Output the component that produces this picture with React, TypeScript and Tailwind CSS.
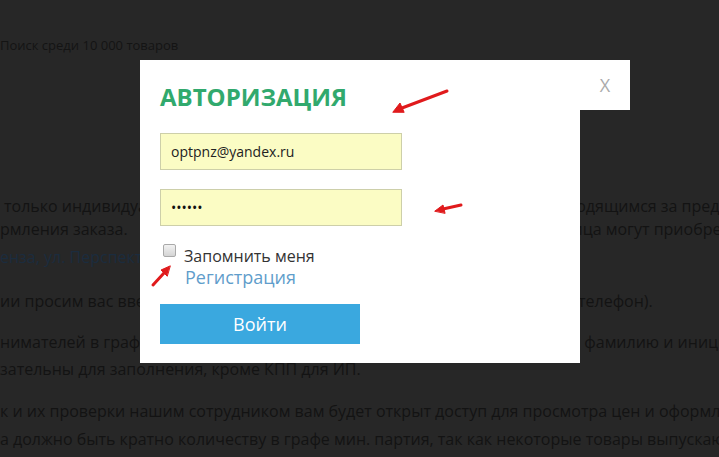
import React from "react";

const lines: { text: string; mt: string; link?: boolean; pl?: string }[] = [
  { text: "только индивидуальным предпринимателям и юридическим лицам, находящимся за пределами", mt: "mt-0", pl: "pl-[4px]" },
  { text: "рмления заказа.\u00a0\u00a0 Физические лица из других регионов и юридические лица могут приобрести", mt: "mt-[-1px]" },
  { text: "енза, ул. Перспективная, д. 1", mt: "mt-[4px]", link: true },
  { text: "ии просим вас ввести реквизиты организации (ИНН, КПП, адрес, личный телефон).", mt: "mt-[20px]" },
  { text: "нимателей в графе «Наименование организации» необходимо указывать фамилию и инициалы", mt: "mt-[17px]" },
  { text: "зательны для заполнения, кроме КПП для ИП.", mt: "mt-[3px]" },
  { text: "к и их проверки нашим сотрудником вам будет открыт доступ для просмотра цен и оформления", mt: "mt-[18px]" },
  { text: "а должно быть кратно количеству в графе мин. партия, так как некоторые товары выпускаются", mt: "mt-[4px]" },
];

export default function App() {
  return (
    <div
      className="relative w-[719px] h-[457px] overflow-hidden bg-[#272727]"
      style={{ fontFamily: "'Open Sans', 'Noto Sans', sans-serif" }}
    >
      {/* background page (under overlay) */}
      <div className="flex flex-col">
        <div className="pt-[36px] text-[13px] leading-[18px] text-[#141414] whitespace-nowrap">
          Поиск среди 10 000 товаров
        </div>
        <div className="mt-[140px] flex flex-col text-[16px] leading-[24px] whitespace-nowrap">
          {lines.map((l, i) => (
            <div
              key={i}
              className={`${l.mt} ${l.pl ?? ""} ${l.link ? "text-[#1b2c3e]" : "text-[#131313]"}`}
            >
              {l.text}
            </div>
          ))}
        </div>
      </div>

      {/* modal */}
      <div className="absolute left-[140px] top-[60px] w-[440px] h-[303px] bg-white">
        <div className="flex flex-col items-start pl-[20px] pt-[21px]">
          <h2 className="text-[24px] leading-[32px] font-bold text-[#31a96d]">АВТОРИЗАЦИЯ</h2>
          <input
            readOnly
            value="optpnz@yandex.ru"
            className="mt-[20px] h-[37px] w-[242px] border border-[#cdcfa9] bg-[#fbfcc4] px-[10px] text-[14px] text-[#222] outline-none"
          />
          <input
            readOnly
            type="password"
            value="123456"
            className="mt-[19px] h-[37px] w-[242px] border border-[#cdcfa9] bg-[#fbfcc4] px-[10px] text-[14px] text-[#111] outline-none"
          />
          <div className="mt-[18px] flex items-start">
            <span className="ml-[3px] h-[13px] w-[13px] rounded-[2px] border border-[#a9a9a9] bg-gradient-to-b from-[#f2f2f2] to-[#d4d4d4]" />
            <div className="ml-[8px] flex flex-col">
              <span className="mt-[2px] text-[16px] leading-[20px] text-[#333]">Запомнить меня</span>
              <span className="ml-[1px] text-[18px] leading-[22px] text-[#5f9dcb]">Регистрация</span>
            </div>
          </div>
          <button className="mt-[16px] h-[40px] w-[200px] bg-[#3aa8df] text-[18px] text-white">
            Войти
          </button>
        </div>
      </div>

      {/* close tab */}
      <div className="absolute left-[580px] top-[60px] flex h-[50px] w-[50px] items-center justify-center bg-white">
        <span className="text-[18px] leading-none text-[#ababab]">X</span>
      </div>

      {/* red annotation arrows */}
      <svg className="absolute left-0 top-0" width="719" height="457" viewBox="0 0 719 457">
        <g stroke="#e01a1c" strokeWidth="3" strokeLinecap="round" fill="#e01a1c">
          <line x1="447" y1="91" x2="402" y2="108" />
          <polygon points="393,112 400,103 404,112" strokeWidth="1" />
          <line x1="461" y1="205" x2="443" y2="209" />
          <polygon points="435,211 443,205 445,213" strokeWidth="1" />
          <line x1="153" y1="285" x2="164" y2="273" />
          <polygon points="170,266 161,270 167,276" strokeWidth="1" />
        </g>
      </svg>
    </div>
  );
}
